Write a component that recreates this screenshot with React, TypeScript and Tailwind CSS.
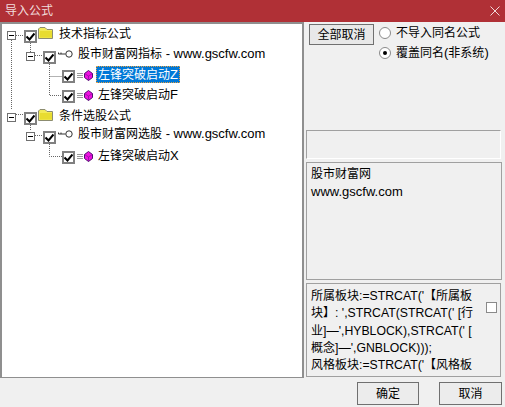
const font = { fontFamily: '"Liberation Sans", "Noto Sans CJK SC", sans-serif' };

// CJK runs are 12px in the picture, latin runs 13px (a bit narrower in the formula box)
function T({ s, tight }: { s: string; tight?: boolean }) {
  return (
    <>
      {s.split(/([\u2E80-\uFFFF]+)/).map((part, i) =>
        /[\u2E80-\uFFFF]/.test(part) ? (
          <span key={i} className="text-[12px]">
            {part}
          </span>
        ) : (
          <span key={i} className={tight ? "text-[12.25px]" : "text-[13px]"}>
            {part}
          </span>
        )
      )}
    </>
  );
}

function Check() {
  return (
    <span className="flex h-[13px] w-[13px] shrink-0 items-center justify-center border-2 border-[#808080] bg-white">
      <svg width="9" height="9" viewBox="0 0 9 9">
        <path d="M0.5 4.5 L3.5 7.5 L8.5 1.5" fill="none" stroke="#000" strokeWidth="2" />
      </svg>
    </span>
  );
}

function Expander() {
  return (
    <span className="mt-px flex h-[9px] w-[9px] shrink-0 items-center justify-center border border-[#707070] bg-white">
      <span className="h-px w-[5px] bg-black" />
    </span>
  );
}

function Folder() {
  return (
    <svg width="16" height="12" viewBox="0 0 16 12" className="ml-px -mt-[3px] shrink-0">
      <path d="M0.5 11.5 V2 L2 0.5 H7 L9 2.5 H14.5 V11.5 Z" fill="#f2ea58" stroke="#8c8c70" />
      <path d="M2 4 H14 V10.5 H2 Z" fill="#e8dc30" />
    </svg>
  );
}

function KeyIcon() {
  return (
    <svg width="15" height="8" viewBox="0 0 15 8" className="ml-[2px] -mt-px shrink-0">
      <circle cx="11" cy="4" r="3.2" fill="#fff" stroke="#333" />
      <path d="M7.5 4 H0.5 V2.5 M3 4 V2.5" fill="none" stroke="#333" />
    </svg>
  );
}

function Gem() {
  return (
    <svg width="16" height="11" viewBox="0 0 16 11" className="ml-[2px] shrink-0">
      <path d="M0 3.5 H6 M0 5.5 H6 M0 7.5 H6" stroke="#9a9a9a" />
      <path d="M11.5 0.5 L15.5 3.5 V7.5 L11.5 10.5 L7.5 7.5 V3.5 Z" fill="#f010e0" stroke="#501070" />
      <path d="M7.5 3.5 L11.5 6 L15.5 3.5 M11.5 6 V10.5" fill="none" stroke="#701090" strokeWidth="0.6" />
    </svg>
  );
}

function Leaf({ label, selected, className }: { label: string; selected?: boolean; className: string }) {
  return (
    <div className={`flex h-[14px] items-start pl-[60px] ${className}`}>
      <Check />
      <Gem />
      {selected ? (
        <span className="ml-[3px] -mt-[4px] flex h-[17px] shrink-0 items-center border border-dotted border-[#e8a040] bg-[#0078d7] px-px text-white">
          <T s={label} />
        </span>
      ) : (
        <span className="ml-[5px] -mt-[4px] shrink-0 leading-[18px]">
          <T s={label} />
        </span>
      )}
    </div>
  );
}

function Group({ title, sub, top, subTop, children }: any) {
  return (
    <>
      <div className={`flex h-[14px] items-start pl-[5px] ${top}`}>
        <Expander />
        <span className="ml-[8px]">
          <Check />
        </span>
        <Folder />
        <span className="ml-[5px] -mt-[5px] shrink-0 leading-[18px]">
          <T s={title} />
        </span>
      </div>
      <div className={`flex h-[14px] items-start pl-[24px] ${subTop}`}>
        <Expander />
        <span className="ml-[8px]">
          <Check />
        </span>
        <KeyIcon />
        <span className="ml-[5px] -mt-[6px] shrink-0 leading-[18px]">
          <T s={sub} />
        </span>
      </div>
      {children}
    </>
  );
}

function Radio({ on, label }: { on?: boolean; label: string }) {
  return (
    <div className="flex h-5 items-center">
      <span className="flex h-[12px] w-[12px] items-center justify-center rounded-full border border-[#8a8a8a] bg-white">
        {on && <span className="h-1 w-1 rounded-full bg-black" />}
      </span>
      <span className="ml-[5px]">
        <T s={label} />
      </span>
    </div>
  );
}

const formula = [
  "所属板块:=STRCAT('【所属板",
  "块】: ',STRCAT(STRCAT(' [行",
  "业]—',HYBLOCK),STRCAT(' [",
  "概念]—',GNBLOCK)));",
  "风格板块:=STRCAT('【风格板",
];

export default function App() {
  return (
    <div className="flex h-[407px] w-[505px] flex-col overflow-hidden bg-[#f0f0f0] text-[13px] text-black" style={font}>
      <div className="flex h-[22px] shrink-0 items-center justify-between bg-[#b03036] pl-[5px] pr-[3px] text-[12px] text-[#f0dcdc]">
        <span>导入公式</span>
        <svg width="10" height="10" viewBox="0 0 10 10" className="mr-[2px]">
          <path d="M0.5 0.5 L9.5 9.5 M9.5 0.5 L0.5 9.5" stroke="#f0d8d8" />
        </svg>
      </div>

      <div className="flex h-[356px] shrink-0">
        <div className="relative h-full w-[304px] shrink-0 border-t-2 border-r-2 border-l-2 border-b border-[#8f8f8f] bg-white pt-[6px]">
          <svg className="absolute -left-[2px] -top-[2px]" width="100" height="160" fill="none" stroke="#666" strokeDasharray="1 1">
            <path d="M11.5 18 V88 M16 13.5 H24 M30.5 21 V30 M35 33.5 H43 M49.5 40 V73.5 H62 M49.5 54.5 H62 M16 92.5 H24 M30.5 101 V109 M35 113.5 H43 M49.5 120 V134.5 H62" />
          </svg>
          <Group title="技术指标公式" sub="股市财富网指标 - www.gscfw.com" top="" subTop="mt-[7px]">
            <Leaf label="左锋突破启动Z" selected className="mt-[5px]" />
            <Leaf label="左锋突破启动F" className="mt-[6px]" />
          </Group>
          <Group title="条件选股公式" sub="股市财富网选股 - www.gscfw.com" top="mt-[8px]" subTop="mt-[5px]">
            <Leaf label="左锋突破启动X" className="mt-[6px]" />
          </Group>
        </div>

        <div className="flex min-w-0 flex-1 flex-col pl-[2px]">
          <div className="flex h-[108px] shrink-0 items-start pl-[3px] pt-[2px]">
            <button className="h-[21px] w-[65px] border border-[#707070] bg-[#e8e8e8] text-[12px]">全部取消</button>
            <div className="-mt-[1px] ml-[5px] flex flex-col">
              <Radio label="不导入同名公式" />
              <Radio on label="覆盖同名(非系统)" />
            </div>
          </div>
          <div className="h-[29px] w-[195px] shrink-0 border border-[#a0a0a0] border-r-white border-b-white" />
          <div className="mt-[3px] h-[118px] w-[196px] shrink-0 border border-[#a0a0a0] px-[4px] py-[2px] leading-[18px]">
            <div>
              <T s="股市财富网" />
            </div>
            <div>
              <T s="www.gscfw.com" />
            </div>
          </div>
          <div className="mt-[3px] flex h-[94px] w-[195px] shrink-0 overflow-hidden border border-[#a0a0a0] px-[4px] pt-[3px] leading-[17px]">
            <div className="w-[165px] shrink-0 whitespace-nowrap">
              {formula.map((line) => (
                <div key={line} className="h-[17.33px]">
                  <T s={line} tight />
                </div>
              ))}
            </div>
            <span className="ml-[10px] mt-[15px] h-[11px] w-[11px] shrink-0 border border-[#8a8a8a] bg-white" />
          </div>
        </div>
      </div>

      <div className="flex flex-1 items-start justify-end gap-[20px] pr-[3px] pt-[4px]">
        <button className="h-[23px] w-[62px] border border-[#707070] bg-[#ececec] text-[12px]">确定</button>
        <button className="h-[23px] w-[63px] border border-[#707070] bg-[#ececec] text-[12px]">取消</button>
      </div>
    </div>
  );
}
